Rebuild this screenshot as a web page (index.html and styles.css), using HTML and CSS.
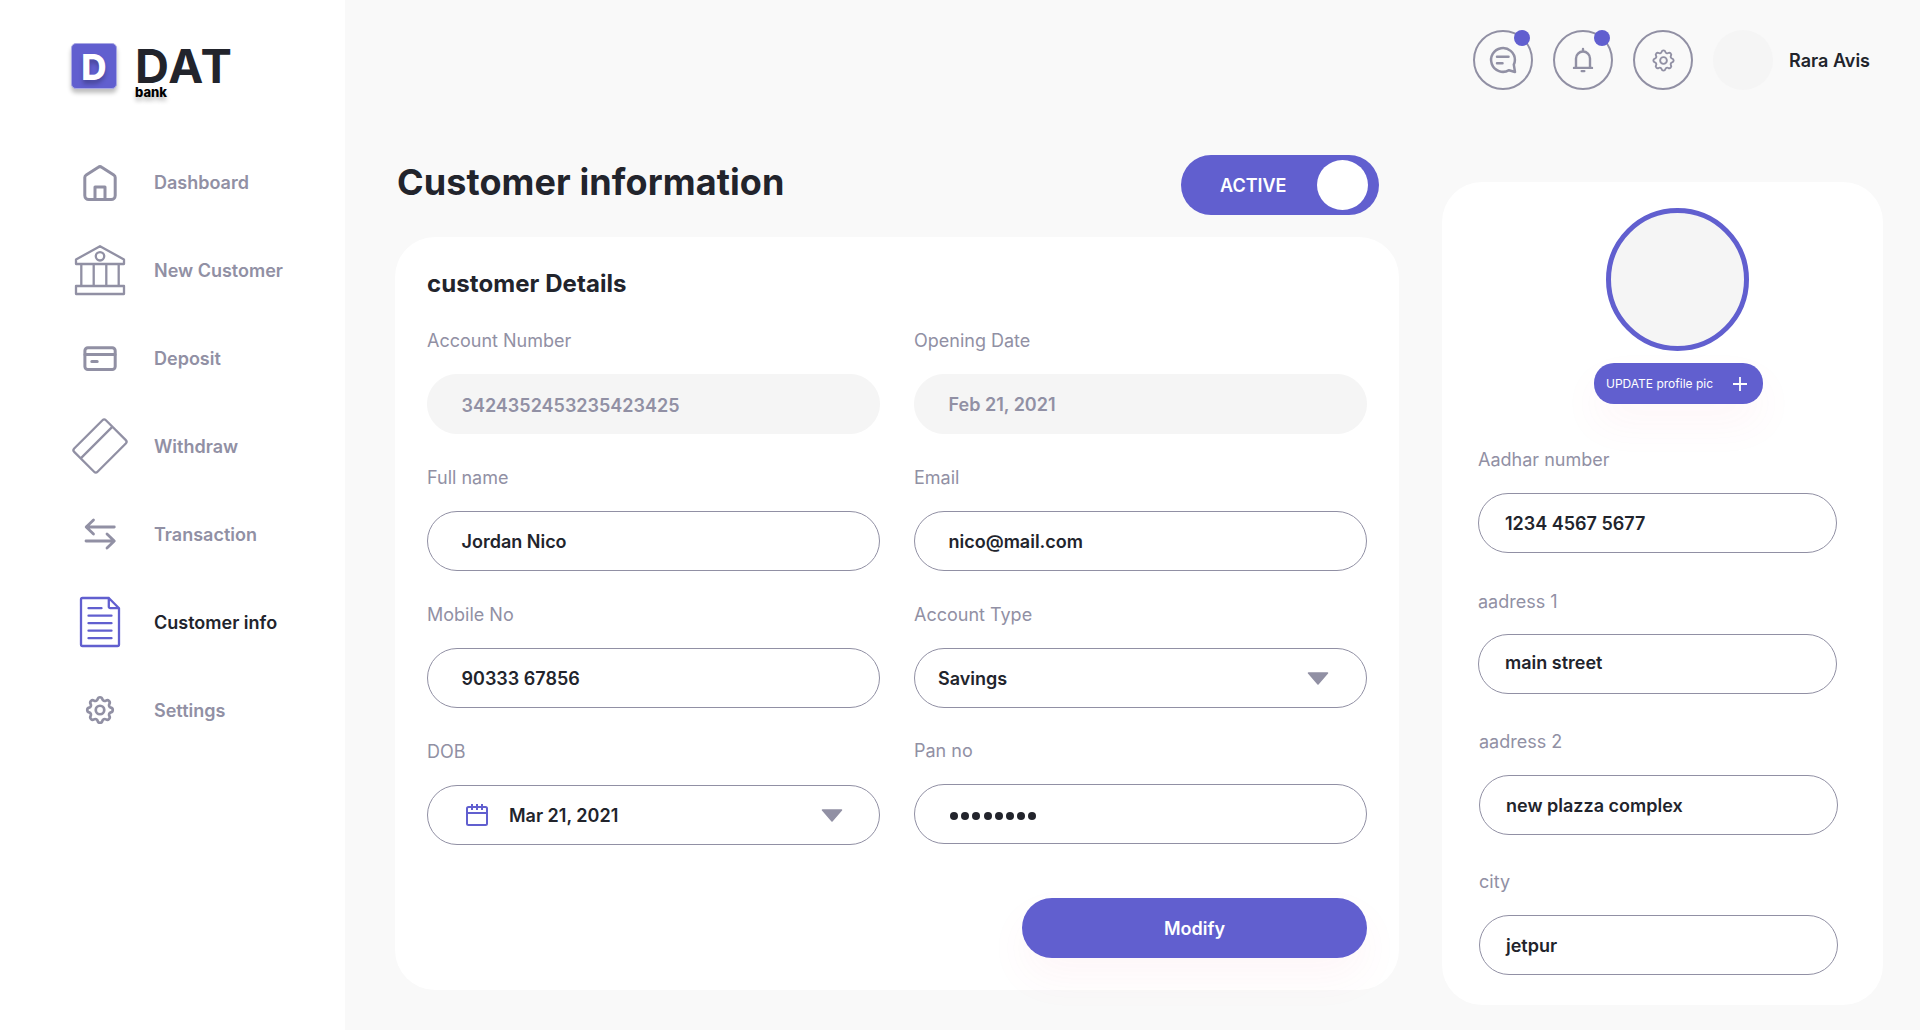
FILE: index.html
```html
<!DOCTYPE html>
<html lang="en">
<head>
<meta charset="utf-8">
<title>DAT bank - Customer information</title>
<link rel="stylesheet" href="styles.css">
</head>
<body>
<svg class="defs" width="0" height="0" aria-hidden="true">
  <symbol id="gear" viewBox="0 0 24 24">
    <path d="M10.325 4.317c.426-1.756 2.924-1.756 3.35 0a1.724 1.724 0 002.573 1.066c1.543-.94 3.31.826 2.37 2.37a1.724 1.724 0 001.065 2.572c1.756.426 1.756 2.924 0 3.35a1.724 1.724 0 00-1.066 2.573c.94 1.543-.826 3.31-2.37 2.37a1.724 1.724 0 00-2.572 1.065c-.426 1.756-2.924 1.756-3.35 0a1.724 1.724 0 00-2.573-1.066c-1.543.94-3.31-.826-2.37-2.37a1.724 1.724 0 00-1.065-2.572c-1.756-.426-1.756-2.924 0-3.35a1.724 1.724 0 001.066-2.573c-.94-1.543.826-3.31 2.37-2.37.996.608 2.296.07 2.572-1.065z"/>
    <circle cx="12" cy="12" r="3"/>
  </symbol>
</svg>
<div class="app">
  <aside class="sidebar">
    <div class="logo">
      <div class="logo-mark">D</div>
      <div class="logo-words"><span class="logo-name">DAT</span><span class="logo-sub">bank</span></div>
    </div>
    <nav class="nav">
      <a class="nav-item">
        <svg class="icon" width="60" height="60" viewBox="0 0 60 60" stroke-width="3"><path d="M14.8 25.5a3 3 0 0 1 1.4-2.6L28.3 15.2a3 3 0 0 1 3.4 0l12.1 7.7a3 3 0 0 1 1.4 2.6V43.500a4 4 0 0 1-4 4H18.800a4 4 0 0 1-4-4zM25 47V35h10v12"/></svg>
        <span>Dashboard</span>
      </a>
      <a class="nav-item">
        <svg class="icon" width="60" height="60" viewBox="0 0 60 60" stroke-width="2.300"><path d="M6 19.500 30 6.200 54 19.500V24H6zM6 46h48v8H6zM11.300 24v22M23.700 24v22M36.300 24v22M48.700 24v22"/><circle cx="30" cy="16.300" r="4.200"/></svg>
        <span>New Customer</span>
      </a>
      <a class="nav-item">
        <svg class="icon" width="60" height="60" viewBox="0 0 60 60" stroke-width="3"><rect x="14.900" y="19.700" width="30.300" height="21.900" rx="3"/><path d="M15 26.600h30M21.800 33.400h5.400"/></svg>
        <span>Deposit</span>
      </a>
      <a class="nav-item">
        <svg class="icon" width="60" height="60" viewBox="0 0 60 60" stroke-width="2.300"><path transform="translate(.45 .45) scale(.985)" d="M32.500 3.800a2.500 2.500 0 0 1 3.500 0L56.200 24a2.500 2.500 0 0 1 0 3.500L27.500 56.200a2.500 2.500 0 0 1-3.500 0L3.800 36a2.500 2.500 0 0 1 0-3.500zM42.200 10.800 11.200 41.800"/></svg>
        <span>Withdraw</span>
      </a>
      <a class="nav-item">
        <svg class="icon" width="60" height="60" viewBox="0 0 60 60" stroke-width="2.800"><path d="M44.300 23h-28M23.500 16l-7.300 7 7.300 7M16 37h28M37 30l7.300 7-7.300 7"/></svg>
        <span>Transaction</span>
      </a>
      <a class="nav-item nav-item-active">
        <svg class="icon" width="60" height="60" viewBox="0 0 60 60" stroke-width="2.300"><path d="M38.800 6H12.500A1.500 1.500 0 0 0 11 7.500v45a1.500 1.500 0 0 0 1.500 1.500h35a1.500 1.500 0 0 0 1.500-1.500V16.200zM38.800 6v8.700a1.500 1.500 0 0 0 1.500 1.500H49M18.500 16.200h13M18.500 23.700h23M18.500 31.200h23M18.500 38.700h23M18.500 46.200h23"/></svg>
        <span>Customer info</span>
      </a>
      <a class="nav-item">
        <svg class="icon icon-gear" width="34" height="34" stroke-width="1.900"><use href="#gear"/></svg>
        <span>Settings</span>
      </a>
    </nav>
  </aside>

  <div class="page">
    <header class="topbar">
      <button class="round-btn">
        <svg class="icon" width="60" height="60" viewBox="0 0 60 60" stroke-width="2.500"><path d="M36 40.200A11.900 11.900 0 1 1 41.900 30c0 1.400-.4 3.200-1.100 4.600L42 42z"/><path d="M24 26.800h11.500M24 33.300h5.500"/></svg>
        <span class="badge"></span>
      </button>
      <button class="round-btn">
        <svg class="icon" width="60" height="60" viewBox="0 0 60 60" stroke-width="2.400"><path d="M30 19v2.500M23 37.700V28.500a7 7 0 0 1 14 0v9.200M21 37.900h18M28.700 41.100h2.600"/></svg>
        <span class="badge"></span>
      </button>
      <button class="round-btn">
        <svg class="icon" width="27" height="27" stroke-width="1.700"><use href="#gear"/></svg>
      </button>
      <div class="user"><span class="user-photo"></span><span class="user-name">Rara Avis</span></div>
    </header>

    <div class="columns">
      <main class="content">
        <div class="heading">
          <h1>Customer information</h1>
          <div class="toggle"><span>ACTIVE</span><i class="knob"></i></div>
        </div>
        <section class="card">
          <h2>customer Details</h2>
          <div class="form">
            <div class="form-col">
              <div class="field"><label>Account Number</label><div class="input input-off input-low">3424352453235423425</div></div>
              <div class="field"><label>Full name</label><div class="input">Jordan Nico</div></div>
              <div class="field"><label>Mobile No</label><div class="input">90333 67856</div></div>
              <div class="field"><label>DOB</label>
                <div class="input input-date">
                  <svg class="calendar" width="24" height="24" viewBox="0 0 24 24"><rect x="2" y="4" width="20" height="18" rx="1.500"/><path d="M2 10h20M7 1v6M12 1v6M17 1v6"/></svg>
                  <span>Mar 21, 2021</span>
                  <svg class="caret" width="22" height="13" viewBox="0 0 22 13"><path d="M1.500 1h19L11 12z"/></svg>
                </div>
              </div>
            </div>
            <div class="form-col">
              <div class="field"><label>Opening Date</label><div class="input input-off">Feb 21, 2021</div></div>
              <div class="field"><label>Email</label><div class="input">nico@mail.com</div></div>
              <div class="field"><label>Account Type</label>
                <div class="input input-select"><span>Savings</span>
                  <svg class="caret" width="22" height="13" viewBox="0 0 22 13"><path d="M1.500 1h19L11 12z"/></svg>
                </div>
              </div>
              <div class="field field-pan"><label>Pan no</label>
                <div class="input dots"><i></i><i></i><i></i><i></i><i></i><i></i><i></i><i></i></div>
              </div>
            </div>
          </div>
          <button class="submit">Modify</button>
        </section>
      </main>

      <aside class="profile">
        <div class="portrait"></div>
        <button class="update"><span>UPDATE profile pic</span>
          <svg width="14" height="14" viewBox="0 0 14 14"><path d="M7 0v14M0 7h14"/></svg>
        </button>
        <div class="details">
          <div class="field"><label>Aadhar number</label><div class="input">1234 4567 5677</div></div>
          <div class="field field-street"><label>aadress 1</label><div class="input">main street</div></div>
          <div class="field field-complex"><label>aadress 2</label><div class="input">new plazza complex</div></div>
          <div class="field field-city"><label>city</label><div class="input">jetpur</div></div>
        </div>
      </aside>
    </div>
  </div>
</div>
</body>
</html>
```
FILE: styles.css
```css
* { box-sizing: border-box; }

:root {
  --purple: #615fcf;
  --gray: #9190a4;
  --dark: #22242c;
}

body {
  margin: 0;
  background: #f9f9f9;
  color: var(--dark);
  font: 600 18px/22px Inter, "Liberation Sans", sans-serif;
}

h1, h2 { margin: 0; }

button {
  padding: 0;
  border: 0;
  background: none;
  font: inherit;
}

.defs { position: absolute; }

.icon {
  display: block;
  fill: none;
  stroke: currentColor;
  stroke-linecap: round;
  stroke-linejoin: round;
}

.app {
  display: flex;
  width: 1920px;
  height: 1030px;
  overflow: hidden;
}

/* Sidebar */
.sidebar {
  flex: none;
  width: 345px;
  background: #fff;
}

.logo {
  display: flex;
  gap: 15px;
  height: 103px;
  padding: 43px 0 0 71px;
}

.logo-mark {
  width: 46px;
  height: 46px;
  border: 1px solid #a9a8e4;
  border-radius: 5px;
  background: var(--purple);
  box-shadow: 0 4px 4px rgba(0, 0, 0, .25);
  color: #fff;
  font: 800 35px/47px Inter, sans-serif;
  text-align: center;
  text-shadow: 0 4px 4px rgba(0, 0, 0, .25);
}

.logo-words { display: flex; flex-direction: column; }

.logo-name {
  margin: 6px 0 0 3px;
  font: 700 47px/34px Inter, sans-serif;
  letter-spacing: 1.3px;
}

.logo-sub {
  margin: 1px 0 0 3px;
  color: #000;
  font: 800 13px/16px Inter, sans-serif;
  text-shadow: 0 4px 4px rgba(0, 0, 0, .25);
}

.nav {
  display: flex;
  flex-direction: column;
  gap: 28px;
  padding: 49px 0 0 70px;
}

.nav-item {
  display: flex;
  align-items: center;
  gap: 24px;
  height: 60px;
  color: var(--gray);
}

.nav-item span { padding-top: 1px; }
.nav-item-active { color: var(--dark); }
.nav-item-active .icon { color: var(--purple); }
.icon-gear { margin: 0 13px; }

/* Top bar */
.page { flex: 1; }

.topbar {
  display: flex;
  justify-content: flex-end;
  gap: 20px;
  height: 90px;
  padding: 30px 50px 0 0;
}

.round-btn {
  position: relative;
  display: flex;
  align-items: center;
  justify-content: center;
  width: 60px;
  height: 60px;
  border: 2px solid var(--gray);
  border-radius: 50%;
  color: var(--gray);
}

.round-btn .icon { flex: none; }

.badge {
  position: absolute;
  top: -2px;
  right: 1px;
  width: 16px;
  height: 16px;
  border-radius: 50%;
  background: var(--purple);
}

.user { display: flex; align-items: center; gap: 16px; }
.user-name { padding-top: 2px; }

.user-photo {
  width: 60px;
  height: 60px;
  border-radius: 50%;
  background: #f5f5f5;
}

/* Columns */
.columns {
  display: flex;
  gap: 43px;
  padding-left: 50px;
}

.content { width: 1004px; padding-top: 65px; }

.heading {
  display: flex;
  justify-content: space-between;
  height: 82px;
  padding: 0 20px 0 2px;
}

h1 { font-size: 36px; line-height: 54px; letter-spacing: .1px; }

.toggle {
  display: flex;
  align-items: center;
  justify-content: space-between;
  width: 198px;
  height: 60px;
  padding: 0 11px 0 39px;
  border-radius: 30px;
  background: var(--purple);
  color: #fff;
}

.toggle span { padding-top: 2px; }

.knob {
  width: 51px;
  height: 50px;
  border-radius: 50%;
  background: #fff;
}

.card {
  display: flex;
  flex-direction: column;
  height: 753px;
  padding: 32px 32px 32px;
  border-radius: 40px;
  background: #fff;
}

h2 { font-size: 24px; line-height: 30px; letter-spacing: .08px; }

.form { display: flex; gap: 34px; margin-top: 31px; }

.form-col {
  display: flex;
  flex-direction: column;
  gap: 33px;
  width: 453px;
}

.field { display: flex; flex-direction: column; gap: 22px; }
.field-pan { margin-top: -1px; }

label { color: var(--gray); font-weight: 400; }

.input {
  display: flex;
  align-items: center;
  height: 60px;
  padding: 2px 33.500px 0;
  border: 1px solid var(--gray);
  border-radius: 30px;
}

.input-off {
  border-color: #f5f5f5;
  background: #f5f5f5;
  color: var(--gray);
}

.input-low { padding-top: 4px; }
.input-select { padding: 0 36px 0 23px; }
.input-select .caret { margin-right: 1px; }
.input-date { padding: 0 36px 0 37px; }
.input-select span { padding-top: 2px; }
.input-date span { margin-left: 20px; padding-top: 2px; }

.calendar {
  fill: none;
  stroke: var(--purple);
  stroke-width: 2;
}

.caret {
  margin-left: auto;
  fill: var(--gray);
  stroke: var(--gray);
  stroke-width: 1.500;
  stroke-linejoin: round;
}

.dots { gap: 3.150px; padding: 3px 0 0 35.200px; }

.dots i {
  width: 8px;
  height: 8px;
  border-radius: 50%;
  background: var(--dark);
}

.submit {
  align-self: flex-end;
  width: 345px;
  height: 60px;
  margin-top: auto;
  padding-top: 2px;
  border-radius: 30px;
  background: var(--purple);
  box-shadow: 0 20px 40px rgba(240, 70, 110, .05);
  color: #fff;
}

/* Profile panel */
.profile {
  display: flex;
  flex-direction: column;
  width: 441px;
  height: 823px;
  margin-top: 92px;
  padding: 26px 36px 0;
  border-radius: 40px;
  background: #fff;
}

.portrait {
  width: 143px;
  height: 143px;
  margin-left: 128px;
  border: 5px solid var(--purple);
  border-radius: 50%;
  background: #f5f5f5;
}

.update {
  display: flex;
  align-items: center;
  justify-content: space-between;
  width: 169px;
  height: 41px;
  margin: 12px 0 0 116px;
  padding: 0 16px 0 12px;
  border-radius: 20px;
  background: var(--purple);
  box-shadow: 0 20px 40px rgba(240, 70, 110, .05);
  color: #fff;
  font-size: 12px;
  font-weight: 400;
}

.update svg { fill: none; stroke: #fff; stroke-width: 1.800; }

.details { width: 359px; margin-top: 45px; }
.details .input { padding: 2px 26px 0; }
.field-street { gap: 21px; margin-top: 38px; }
.details .field-street .input { padding: 0 26px 2px; }
.field-complex { margin: 37px -1px 0 1px; }
.field-city { margin: 36px -1px 0 1px; }
```
